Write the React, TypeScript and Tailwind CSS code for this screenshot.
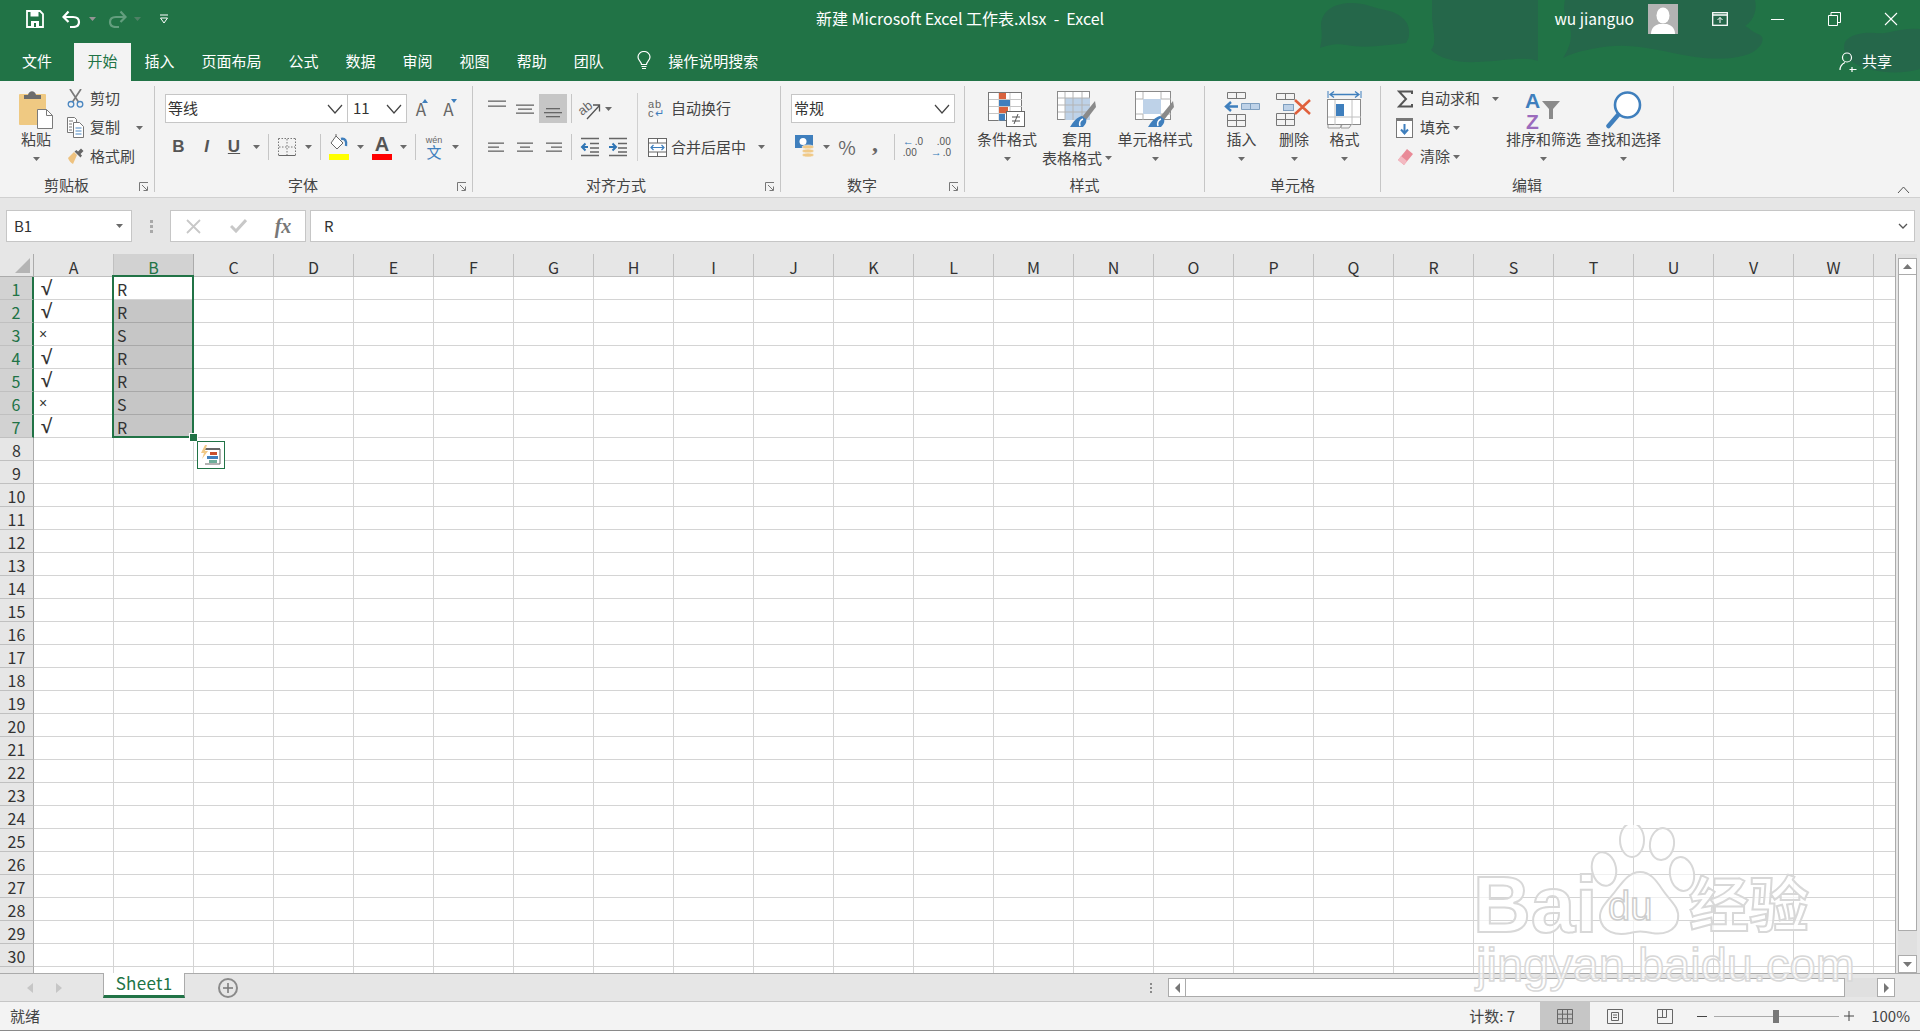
import type { ReactNode } from 'react'

const columns = 'ABCDEFGHIJKLMNOPQRSTUVWX'.split('')
const rows = Array.from({ length: 31 }, (_, i) => i + 1)
const colA = ['√', '√', '×', '√', '√', '×', '√']
const colB = ['R', 'R', 'S', 'R', 'R', 'S', 'R']

function Caret({ className = '' }: { className?: string }) {
  return (
    <svg width="7" height="4" viewBox="0 0 7 4" className={`shrink-0 ${className}`}>
      <path d="M0 0h7L3.5 4z" fill="#6a6a6a" />
    </svg>
  )
}

function Slot({ className = '', children }: { className?: string; children?: ReactNode }) {
  return <span className={`flex items-center justify-center shrink-0 h-full ${className}`}>{children}</span>
}

function Sep() {
  return <span className="block w-px h-full bg-[#c6c6c6]" />
}

function Chevron({ size = 16 }: { size?: number }) {
  return (
    <svg width={size} height="10" viewBox="0 0 16 10">
      <path d="M1 1l7 8 7-8" fill="none" stroke="#444" strokeWidth="1.2" />
    </svg>
  )
}

function Launcher() {
  return (
    <svg width="10" height="10" viewBox="0 0 10 10">
      <path d="M0.5 9V0.5H9M3 3l5 5M8.500 4.500v4h-4" fill="none" stroke="#777" strokeWidth="1" />
    </svg>
  )
}

function Group({ className, label, launcher, children }: { className: string; label: string; launcher?: boolean; children: ReactNode }) {
  return (
    <div className={`flex flex-col h-[106px] mt-[5px] shrink-0 border-r border-[#c6c6c6] ${className}`}>
      <div className="flex h-[89px]">{children}</div>
      <div className="flex items-center h-[17px] pt-[4px] text-[15px] text-[#444]">
        <span className="flex-1 text-center">{label}</span>
        {launcher && <span className="flex justify-center w-[21px] pt-[2px]"><Launcher /></span>}
      </div>
    </div>
  )
}

function Large({ className = '', icon, lines, caret = true, inlineCaret }: { className?: string; icon: ReactNode; lines: string[]; caret?: boolean; inlineCaret?: boolean }) {
  return (
    <div className={`flex flex-col items-center shrink-0 pt-[4px] text-[15px] leading-[19px] text-[#444] ${className}`}>
      <div className="flex items-center justify-center h-[39px]">{icon}</div>
      {lines.map((line, i) => (
        <div key={line} className="flex items-center whitespace-nowrap h-[19px]">
          {line}
          {inlineCaret && i === lines.length - 1 && <Caret className="ml-[3px]" />}
        </div>
      ))}
      {caret && !inlineCaret && <div className="flex items-center h-[21px]"><Caret /></div>}
    </div>
  )
}

function SmallRow({ icon, text, caret, iconClass = 'w-[17px]', textClass = 'ml-[6px]', caretClass = 'ml-[5px]' }: { icon: ReactNode; text: string; caret?: boolean; iconClass?: string; textClass?: string; caretClass?: string }) {
  return (
    <div className="flex items-center h-[29px] text-[15px] text-[#444] whitespace-nowrap">
      <span className={`flex justify-center shrink-0 ${iconClass}`}>{icon}</span>
      <span className={textClass}>{text}</span>
      {caret && <Caret className={caretClass} />}
    </div>
  )
}

function Lines({ items }: { items: [number, number][] }) {
  return (
    <svg width="20" height="18" viewBox="0 0 20 18">
      {items.map(([x, y], i) => (
        <rect key={i} x={x} y={y} width={20 - 2 * x} height="1.300" fill="#666" />
      ))}
    </svg>
  )
}

function LeftLines({ items }: { items: [number, number, number][] }) {
  return (
    <svg width="20" height="18" viewBox="0 0 20 18">
      {items.map(([x, w, y], i) => (
        <rect key={i} x={x} y={y} width={w} height="1.300" fill="#666" />
      ))}
    </svg>
  )
}

function PasteIcon() {
  return (
    <svg width="36" height="40" viewBox="0 0 36 40">
      <rect x="1" y="4" width="27" height="31" rx="1" fill="#efc982" />
      <path d="M6 9V5h4c1-5 7-5 8 0h5v4z" fill="#6c6c6c" />
      <path d="M19.500 19.500h9l6 6v13h-15z" fill="#fff" stroke="#7a7a7a" />
      <path d="M28.500 19.500v6h6" fill="none" stroke="#7a7a7a" />
    </svg>
  )
}

function ScissorsIcon() {
  return (
    <svg width="17" height="19" viewBox="0 0 17 19">
      <path d="M3 0l8.500 13M14 0L5.500 13" stroke="#7a7a7a" strokeWidth="1.700" fill="none" />
      <circle cx="4" cy="15.300" r="2.800" fill="none" stroke="#4a86c0" strokeWidth="1.300" />
      <circle cx="13" cy="15.300" r="2.800" fill="none" stroke="#4a86c0" strokeWidth="1.300" />
    </svg>
  )
}

function CopyIcon() {
  return (
    <svg width="17" height="21" viewBox="0 0 17 21">
      <path d="M.5 .5h7l2 2v13H.5z" fill="#fff" stroke="#777" />
      <path d="M6.500 5.500h6l4 4v11h-10z" fill="#fff" stroke="#777" />
      <path d="M2 4h4M2 7h3M2 10h3M2 13h3" stroke="#777" />
      <path d="M8.500 11h6M8.500 14h6M8.500 17h6" stroke="#4a86c0" />
    </svg>
  )
}

function BrushIcon() {
  return (
    <svg width="17" height="17" viewBox="0 0 17 17">
      <path d="M10 7l-3-3 -6 6c1 3 3 5 5 6z" fill="#eec27f" />
      <path d="M7.500 3.500l2-1.500 5.500 5.500-1.500 2zM11 3.500L14 .5l2.500 2.500-3 3z" fill="#666" />
    </svg>
  )
}

function FillIcon() {
  return (
    <svg width="20" height="26" viewBox="0 0 20 26">
      <path d="M7 2l7 7-6 6-6-6z" fill="#fff" stroke="#666" />
      <path d="M7 2V0" stroke="#666" />
      <path d="M12 5c4-1 6 2 5 7" fill="none" stroke="#3f7fbd" strokeWidth="2.400" />
      <rect y="20" width="20" height="6" fill="#ffff00" />
    </svg>
  )
}

function OrientationIcon() {
  return (
    <svg width="26" height="26" viewBox="0 0 26 26" className="overflow-visible">
      <text x="2" y="17" fontSize="13" fill="#666" transform="rotate(-38 8 14)" fontFamily="Liberation Sans">ab</text>
      <path d="M10 23L22 10M16 9h6.500v6.500" fill="none" stroke="#555" strokeWidth="1.300" />
    </svg>
  )
}

function MergeIcon() {
  return (
    <svg width="19" height="19" viewBox="0 0 19 19">
      <rect x=".5" y=".5" width="18" height="18" fill="#fff" stroke="#666" />
      <path d="M1 5h17M1 14h17M9.500 1v4M9.500 14v4" stroke="#666" />
      <path d="M3 9.500h13M5.500 7l-2.500 2.500L5.500 12M13.500 7l2.500 2.500L13.500 12" fill="none" stroke="#3f7fbd" strokeWidth="1.200" />
    </svg>
  )
}

function IndentIcon({ flip }: { flip?: boolean }) {
  return (
    <svg width="20" height="20" viewBox="0 0 20 20">
      <path d="M1 1.500h18M10 6.500h9M10 11h9M10 15h9M1 18.500h18" stroke="#666" strokeWidth="1.300" />
      {flip
        ? <path d="M1 10h6M4.500 6.500L8 10l-3.500 3.500" fill="none" stroke="#2f75b5" strokeWidth="2" />
        : <path d="M8 10H2M5.500 6.500L2 10l3.500 3.500" fill="none" stroke="#2f75b5" strokeWidth="2" />}
    </svg>
  )
}

function CurrencyIcon() {
  return (
    <svg width="20" height="24" viewBox="0 0 20 24">
      <rect width="18" height="13" fill="#3f7fbd" />
      <circle cx="8" cy="6.500" r="3.500" fill="#fff" />
      <ellipse cx="13" cy="12" rx="6" ry="2" fill="#f0c987" stroke="#f3f3f3" strokeWidth=".6" />
      <ellipse cx="13" cy="16" rx="6" ry="2" fill="#f0c987" stroke="#f3f3f3" strokeWidth=".6" />
      <ellipse cx="13" cy="20" rx="6" ry="2" fill="#f0c987" stroke="#f3f3f3" strokeWidth=".6" />
    </svg>
  )
}

function DecimalIcon({ up }: { up?: boolean }) {
  return (
    <span className="flex flex-col text-[10px] leading-[11px] text-[#555] font-['Liberation_Sans',sans-serif]">
      {up ? (
        <>
          <span className="flex items-center"><i className="not-italic text-[#2f75b5] text-[11px] font-bold mr-[1px]">←</i>.0</span>
          <span>.00</span>
        </>
      ) : (
        <>
          <span className="pl-[6px]">.00</span>
          <span className="flex items-center"><i className="not-italic text-[#2f75b5] text-[11px] font-bold mr-[1px]">→</i>.0</span>
        </>
      )}
    </span>
  )
}

function ConditionalIcon() {
  return (
    <svg width="38" height="36" viewBox="0 0 38 36">
      <rect x=".5" y=".5" width="33" height="28" fill="#fff" stroke="#777" />
      <path d="M1 7.500h33M1 14.500h33M1 21.500h33M11 1v28M22 1v28" stroke="#c6c6c6" />
      <rect x="11" y="1" width="7" height="6" fill="#d9623d" />
      <rect x="11" y="8" width="11" height="6" fill="#3f7fbd" />
      <rect x="11" y="15" width="9" height="6" fill="#d9623d" />
      <rect x="11" y="22" width="6" height="6.500" fill="#3f7fbd" />
      <rect x="18.500" y="19.500" width="18" height="15" fill="#fff" stroke="#666" />
      <path d="M24 25h8M24 29h8M30 22l-4 10" stroke="#555" fill="none" />
    </svg>
  )
}

function Roller() {
  return (
    <>
      <path d="M38 10l1 6-10 13-4-3z" fill="#8a8a8a" />
      <path d="M25 25c-5 1-9 6-12 11h13c3-3 4-6 3-8z" fill="#3f7fbd" />
      <path d="M26 28c-3 1-4 4-3 7" fill="none" stroke="#fff" strokeWidth="1.500" />
    </>
  )
}

function TableStyleIcon() {
  return (
    <svg width="40" height="37" viewBox="0 0 40 37">
      <rect x=".5" y=".5" width="32" height="28" fill="#fff" stroke="#8a8a8a" />
      <rect x="8" y="7" width="25" height="22" fill="#bed2e8" />
      <path d="M1 7h32M1 14h32M1 21h32M8 1v28M16 1v28M25 1v28" stroke="#b4b4b4" />
      <Roller />
    </svg>
  )
}

function CellStyleIcon() {
  return (
    <svg width="40" height="37" viewBox="0 0 40 37">
      <rect x=".5" y=".5" width="35" height="28" fill="#fff" stroke="#8a8a8a" />
      <rect x="8" y="8" width="18" height="15" fill="#bed2e8" />
      <path d="M1 8h7M26 8h10M1 23h7M26 23h10M8 1v7M26 1v7M8 23v6M26 23v6" stroke="#b4b4b4" />
      <Roller />
    </svg>
  )
}

function InsertIcon() {
  return (
    <svg width="36" height="35" viewBox="0 0 36 35">
      <path d="M3.500 .5h18v6h-18zM12.500 .5v6M3.500 22.500h18v12h-18zM3.500 28.500h18M12.500 22.500v12" fill="none" stroke="#777" />
      <path d="M17.500 11.500h18v6h-18z" fill="#bed2e8" stroke="#7f9fbf" />
      <path d="M26.500 11.500v6" stroke="#7f9fbf" />
      <path d="M2 14.500h12M7 10l-5 4.500L7 19" fill="none" stroke="#3f7fbd" strokeWidth="2.400" />
    </svg>
  )
}

function DeleteIcon() {
  return (
    <svg width="36" height="33" viewBox="0 0 36 33">
      <path d="M.5 .5h18v6H.5zM9.500 .5v6M.5 20.500h18v12H.5zM.5 26.500h18M9.500 20.500v12" fill="none" stroke="#777" />
      <rect x="7.500" y="11.500" width="10" height="6" fill="#bed2e8" stroke="#7f9fbf" />
      <path d="M19 7l15 14M34 7L19 21" stroke="#e0603c" strokeWidth="2.500" />
    </svg>
  )
}

function FormatIcon() {
  return (
    <svg width="36" height="38" viewBox="0 0 36 38">
      <path d="M1 0v7M34 0v7" stroke="#3f7fbd" />
      <path d="M3 3.500h29M7 .5l-4 3 4 3M28 .5l4 3-4 3" fill="none" stroke="#3f7fbd" strokeWidth="1.300" />
      <rect x=".5" y="8.500" width="33" height="25" fill="#fff" stroke="#8a8a8a" />
      <path d="M1 26h33M8 9v25M25 9v25" stroke="#c0c0c0" />
      <rect x="9" y="13" width="8" height="12" fill="#3f7fbd" />
      <path d="M1 34v3h12l2-3M14 34v3h8l2-3" fill="none" stroke="#999" />
    </svg>
  )
}

function SortIcon() {
  return (
    <svg width="38" height="40" viewBox="0 0 38 40" fontFamily="Liberation Sans" fontWeight="700" fontSize="21">
      <text x="0" y="18" fill="#3f7fbd">A</text>
      <text x="1" y="39" fill="#9b6bbd">Z</text>
      <path d="M17 11h18l-7 8v10h-4V19z" fill="#8a8a8a" />
    </svg>
  )
}

function FindIcon() {
  return (
    <svg width="36" height="42" viewBox="0 0 36 42">
      <circle cx="21.500" cy="16" r="12.500" fill="#fff" stroke="#3f7fbd" strokeWidth="2.600" />
      <path d="M12 26L2.500 37" stroke="#3f7fbd" strokeWidth="4.500" strokeLinecap="round" />
    </svg>
  )
}

function Paw() {
  return (
    <svg width="112" height="112" viewBox="0 0 112 112" className="shrink-0">
      <g fill="rgba(255,255,255,.65)" stroke="#d8d8d8" strokeWidth="2">
        <ellipse cx="14" cy="44" rx="12" ry="17" transform="rotate(-12 14 44)" />
        <ellipse cx="42" cy="15" rx="12" ry="17" />
        <ellipse cx="72" cy="19" rx="12" ry="16" transform="rotate(8 72 19)" />
        <ellipse cx="92" cy="49" rx="12" ry="17" transform="rotate(-10 92 49)" />
        <path d="M50 47c10 0 16 8 22 17 8 12 18 18 16 30-2 13-16 16-26 14-8-2-16-2-22 0-14 3-28-1-30-15-1-11 10-19 17-29 7-9 13-17 23-17z" />
      </g>
      <text x="18" y="95" fontSize="40" fontFamily="Liberation Sans" fill="rgba(255,255,255,.7)" stroke="#cdcdcd" strokeWidth="1.500">du</text>
    </svg>
  )
}

function Watermark() {
  return (
    <div className="absolute left-[1473px] top-[825px] z-20 pointer-events-none font-['Liberation_Sans',sans-serif]">
      <div className="flex items-end h-[112px]">
        <span className="w-[117px] mb-[-12px] text-[80px] leading-[88px] font-bold text-white/70 [-webkit-text-stroke:2px_#d8d8d8]">Bai</span>
        <span className="-mr-[13px]"><Paw /></span>
        <span className="text-[60px] leading-[72px] font-bold text-white/70 [-webkit-text-stroke:2px_#d8d8d8] font-['Noto_Sans_CJK_SC',sans-serif]">经验</span>
      </div>
      <div className="text-[47px] leading-[50px] mt-[3px] ml-[3px] text-white/70 [-webkit-text-stroke:1.500px_#d8d8d8] whitespace-nowrap">jingyan.baidu.com</div>
    </div>
  )
}

function TitleBar() {
  const tabs = ['文件', '开始', '插入', '页面布局', '公式', '数据', '审阅', '视图', '帮助', '团队']
  return (
    <header className="relative shrink-0 h-[81px] bg-[#217346] text-white overflow-hidden">
      <svg width="620" height="81" viewBox="0 0 620 81" className="absolute right-0 top-0">
        <g fill="#25674a">
          <path d="M20 48c2-8 2-14 1-22 0-14 12-23 30-23 14 0 20 4 30 6 18 3 30 12 28 26 0 3-2 6-3 8-20 2-40 6-60 2-10-2-20 1-26 3z" />
          <path d="M132 0h106v61c-14-5-34 0-60 1-20 1-38-3-47-12 6-6 2-20 1-32 0-6 0-12 0-18z" />
          <path d="M265 0h190c2 8 0 20-10 26 6 3 4 4 15 9 4 2 3 8-1 12-8 10-30 13-55 11-30-3-60-14-90-12-18 1-40 6-51 12 5-8 12-20 5-36-4-8-5-14-3-22z" />
          <path d="M545 42c5-8 20-10 30-9 12 2 25-6 45-4v40c-20 6-50 4-66-6-8-6-12-14-9-21z" />
        </g>
      </svg>
      <div className="relative flex items-center h-[43px] pb-[5px]">
        <span className="ml-[26px]">
          <svg width="18" height="18" viewBox="0 0 18 18"><path d="M1 1h13l3 3v13H1z" fill="none" stroke="#fff" strokeWidth="1.800" /><path d="M4.500 1.500h8v5h-8zM5 11h8v6h-8z" fill="#fff" /><rect x="8" y="13" width="2" height="4" fill="#217346" /></svg>
        </span>
        <span className="ml-[18px]">
          <svg width="19" height="18" viewBox="0 0 19 18"><path d="M2 7h9c4 0 6 2 6 5s-2 5-6 5H8" fill="none" stroke="#fff" strokeWidth="2.200" /><path d="M6.500 1.500L1.500 7l5 5" fill="none" stroke="#fff" strokeWidth="2.200" /></svg>
        </span>
        <Caret className="ml-[8px] invert" />
        <span className="ml-[12px] opacity-40">
          <svg width="19" height="18" viewBox="0 0 19 18"><path d="M17 7H8c-4 0-6 2-6 5s2 5 6 5h3" fill="none" stroke="#c7e0d2" strokeWidth="2.200" /><path d="M12.500 1.500l5 5.500-5 5" fill="none" stroke="#c7e0d2" strokeWidth="2.200" /></svg>
        </span>
        <Caret className="ml-[7px] invert opacity-40" />
        <span className="ml-[18px]">
          <svg width="10" height="10" viewBox="0 0 10 10"><path d="M1 1h8M1.500 4l3.500 5 3.500-5z" fill="none" stroke="#fff" /></svg>
        </span>
        <span className="absolute left-0 right-0 top-0 text-center leading-[37px] text-[16px] pointer-events-none">新建 Microsoft Excel 工作表.xlsx&nbsp; -&nbsp; Excel</span>
        <span className="ml-auto text-[15.500px]">wu jianguo</span>
        <span className="flex items-end justify-center overflow-hidden ml-[14px] w-[30px] h-[30px] bg-[#b3b3b3]">
          <svg width="26" height="27" viewBox="0 0 26 27"><ellipse cx="13" cy="8.500" rx="6.500" ry="8" fill="#fff" /><path d="M1 27c0-7 5-9 8-10h8c3 1 8 3 8 10z" fill="#fff" /></svg>
        </span>
        <span className="flex justify-center ml-[34px] w-[16px]">
          <svg width="16" height="14" viewBox="0 0 16 14"><rect x=".7" y=".7" width="14.600" height="12.600" fill="none" stroke="#fff" strokeWidth="1.300" /><path d="M1 3h14" stroke="#fff" strokeWidth="1.500" /><path d="M8 11V5.500M5.500 8L8 5.500 10.500 8" fill="none" stroke="#fff" /></svg>
        </span>
        <span className="flex justify-center ml-[41px] w-[16px]"><span className="block w-[13px] h-px bg-white" /></span>
        <span className="flex justify-center ml-[41px] w-[16px]">
          <svg width="13" height="14" viewBox="0 0 13 14"><path d="M.5 3.500h9v10h-9zM3 3.500V.5h9.500v10H9.500" fill="none" stroke="#fff" /></svg>
        </span>
        <span className="flex justify-center ml-[41px] mr-[21px] w-[16px]">
          <svg width="14" height="14" viewBox="0 0 14 14"><path d="M1 1l12 12M13 1L1 13" stroke="#fff" strokeWidth="1.100" /></svg>
        </span>
      </div>
      <nav className="relative flex items-stretch h-[38px] pl-[8.500px] text-[15px]">
        {tabs.map(t => (
          <span
            key={t}
            className={`flex items-center pb-[2px] ${t === '文件' ? 'pl-[13.500px] pr-[22px]' : 'px-[13.500px]'} ${t === '开始' ? 'bg-[#f3f3f3] text-[#217346]' : ''}`}
          >
            {t}
          </span>
        ))}
        <span className="flex items-center ml-[20px] pb-[2px]">
          <svg width="14" height="20" viewBox="0 0 14 20"><path d="M4.500 13.500c0-3-3.500-4-3.500-7.500a6 5.500 0 0 1 12 0c0 3.500-3.500 4.500-3.500 7.500z" fill="none" stroke="#fff" strokeWidth="1.200" /><path d="M4.500 15.500h5M5 17.500h4" stroke="#fff" strokeWidth="1.200" /></svg>
        </span>
        <span className="flex items-center ml-[17px] pb-[2px]">操作说明搜索</span>
        <span className="flex items-center ml-auto mr-[28px] pb-[2px]">
          <svg width="18" height="21" viewBox="0 0 18 21" className="mr-[5px]"><circle cx="8" cy="6.500" r="4.500" fill="none" stroke="#fff" strokeWidth="1.200" /><path d="M1 19c0-4 2-6 5-7.500M13 16v5M10.500 18.500h7" fill="none" stroke="#fff" strokeWidth="1.200" /></svg>
          共享
        </span>
      </nav>
    </header>
  )
}

function Ribbon() {
  return (
    <section className="flex shrink-0 h-[117px] bg-[#f3f3f3] border-b border-[#d0d0d0]">
      <Group className="w-[155px]" label="剪贴板" launcher>
        <Large className="ml-[6px] w-[60px]" icon={<PasteIcon />} lines={['粘贴']} />
        <div className="ml-[1px] -mt-[2px]">
          <SmallRow icon={<ScissorsIcon />} text="剪切" />
          <SmallRow icon={<CopyIcon />} text="复制" caret caretClass="ml-[16px]" />
          <SmallRow icon={<BrushIcon />} text="格式刷" />
        </div>
      </Group>

      <Group className="w-[318px]" label="字体" launcher>
        <div className="pl-[10px] pt-[8px] text-[15px] text-[#333]">
          <div className="flex items-center h-[29px]">
            <div className="flex items-center justify-between w-[183px] h-full pl-[2px] pr-[4px] bg-white border border-[#c6c6c6]">等线<Chevron /></div>
            <div className="flex items-center justify-between w-[60px] h-full -ml-px pl-[5px] pr-[4px] bg-white border border-[#c6c6c6]">11<Chevron /></div>
            <Slot className="w-[28px] text-[17px] text-[#666]">
              <span className="relative">A<i className="absolute top-[3px] -right-[2px] block border-x-[3px] border-b-[4px] border-x-transparent border-b-[#3f7fbd]" /></span>
            </Slot>
            <Slot className="w-[27px] text-[17px] text-[#666]">
              <span className="relative">A<i className="absolute top-[3px] -right-[3px] block border-x-[3px] border-t-[4px] border-x-transparent border-t-[#3f7fbd]" /></span>
            </Slot>
          </div>
          <div className="flex items-center h-[26px] mt-[11px] text-[#555] font-['Liberation_Sans',sans-serif] text-[17px]">
            <Slot className="w-[27px] font-bold">B</Slot>
            <Slot className="w-[29px] italic font-bold">I</Slot>
            <Slot className="w-[26px] font-bold underline">U</Slot>
            <Slot className="w-[18px]"><Caret /></Slot>
            <Slot className="w-[7px]"><Sep /></Slot>
            <Slot className="w-[29px]">
              <svg width="18" height="18" viewBox="0 0 18 18"><path d="M.5 .5h17M.5 .5v17M17.500 .5v17M9 1v16M1 9h16" fill="none" stroke="#777" strokeDasharray="1.500 1.500" /><path d="M.5 17.500h17" stroke="#666" /></svg>
            </Slot>
            <Slot className="w-[14px]"><Caret /></Slot>
            <Slot className="w-[10px]"><Sep /></Slot>
            <Slot className="w-[28px]"><FillIcon /></Slot>
            <Slot className="w-[14px]"><Caret /></Slot>
            <Slot className="w-[30px]">
              <span className="flex flex-col items-center font-bold text-[20px] leading-[20px] text-[#555]">A<i className="block w-[20px] h-[6px] bg-[#ff0000]" /></span>
            </Slot>
            <Slot className="w-[12px]"><Caret /></Slot>
            <Slot className="w-[13px]"><Sep /></Slot>
            <Slot className="w-[24px]">
              <span className="flex flex-col items-center text-[9px] leading-[9px] text-[#666]">wén<b className="font-normal text-[15px] leading-[14px] text-[#3f7fbd] font-['Noto_Sans_CJK_SC',sans-serif]">文</b></span>
            </Slot>
            <Slot className="w-[18px]"><Caret /></Slot>
          </div>
        </div>
      </Group>

      <Group className="w-[308px]" label="对齐方式" launcher>
        <div className="pl-[10px] pt-[8px] w-[164px]">
          <div className="flex items-center h-[29px]">
            <Slot className="w-[28px]"><Lines items={[[1, 0.500], [1, 5.500]]} /></Slot>
            <Slot className="w-[28px]"><Lines items={[[1, 4.500], [3, 8.500], [1, 12.500]]} /></Slot>
            <Slot className="w-[28px] bg-[#c6c6c6]"><Lines items={[[3, 8], [1, 12], [3, 16]]} /></Slot>
            <Slot className="w-[8px]"><Sep /></Slot>
            <Slot className="w-[30px]"><OrientationIcon /></Slot>
            <Slot className="w-[6px]"><Caret /></Slot>
          </div>
          <div className="flex items-center h-[26px] mt-[11px]">
            <Slot className="w-[28px]"><LeftLines items={[[1, 16, 4.500], [1, 11, 8.500], [1, 16, 12.500]]} /></Slot>
            <Slot className="w-[28px]"><Lines items={[[2, 4.500], [5, 8.500], [2, 12.500]]} /></Slot>
            <Slot className="w-[28px]"><LeftLines items={[[3, 16, 4.500], [8, 11, 8.500], [3, 16, 12.500]]} /></Slot>
            <Slot className="w-[8px]"><Sep /></Slot>
            <Slot className="w-[30px]"><IndentIcon /></Slot>
            <Slot className="w-[26px]"><IndentIcon flip /></Slot>
          </div>
        </div>
        <div className="w-px h-[68px] mt-[7px] bg-[#d0d0d0]" />
        <div className="pl-[10px] pt-[8px] text-[15px] text-[#444]">
          <div className="flex items-center h-[29px]">
            <span className="flex flex-col items-start w-[18px] font-['Liberation_Sans',sans-serif] text-[11px] leading-[9px] tracking-[1px] text-[#666]">ab<span className="flex items-center leading-[9px]">c<i className="not-italic text-[#3f7fbd]">↵</i></span></span>
            <span className="ml-[5px] whitespace-nowrap">自动换行</span>
          </div>
          <div className="flex items-center h-[26px] mt-[11px] whitespace-nowrap">
            <MergeIcon />
            <span className="ml-[4px]">合并后居中</span>
            <Caret className="ml-[12px]" />
          </div>
        </div>
      </Group>

      <Group className="w-[184px]" label="数字" launcher>
        <div className="pl-[10px] pt-[8px] text-[15px] text-[#333]">
          <div className="flex items-center justify-between w-[164px] h-[29px] pl-[2px] pr-[4px] bg-white border border-[#c6c6c6]">常规<Chevron /></div>
          <div className="flex items-center h-[26px] mt-[11px] text-[#666]">
            <Slot className="w-[27px]"><CurrencyIcon /></Slot>
            <Slot className="w-[16px]"><Caret /></Slot>
            <Slot className="w-[26px] text-[19px]">%</Slot>
            <Slot className="w-[30px] pb-[8px] text-[24px] font-bold font-['Liberation_Serif',serif]">,</Slot>
            <Slot className="w-[8px]"><Sep /></Slot>
            <Slot className="w-[30px]"><DecimalIcon up /></Slot>
            <Slot className="w-[26px]"><DecimalIcon /></Slot>
          </div>
        </div>
      </Group>

      <Group className="w-[240px]" label="样式">
        <Large className="ml-[7px] w-[70px]" icon={<ConditionalIcon />} lines={['条件格式']} />
        <Large className="w-[70px]" icon={<TableStyleIcon />} lines={['套用', '表格格式']} inlineCaret />
        <Large className="w-[86px]" icon={<CellStyleIcon />} lines={['单元格样式']} />
      </Group>

      <Group className="w-[176px]" label="单元格">
        <Large className="ml-[10px] w-[53px]" icon={<InsertIcon />} lines={['插入']} />
        <Large className="w-[52px]" icon={<DeleteIcon />} lines={['删除']} />
        <Large className="w-[49px]" icon={<FormatIcon />} lines={['格式']} />
      </Group>

      <Group className="w-[293px]" label="编辑">
        <div className="ml-[14px] -mt-[2px] w-[111px]">
          <SmallRow
            iconClass="w-[19px]"
            icon={<svg width="16" height="18" viewBox="0 0 16 18"><path d="M15 4V1.500H2L9 9l-7 7.500h13V14" fill="none" stroke="#555" strokeWidth="2" /></svg>}
            text="自动求和"
            caret
            caretClass="ml-[12px]"
          />
          <SmallRow
            iconClass="w-[19px]"
            icon={<svg width="17" height="20" viewBox="0 0 17 20"><rect x=".5" y=".5" width="16" height="19" fill="#fff" stroke="#777" /><rect width="17" height="3" fill="#777" /><path d="M8.500 6v9M5 11.500L8.500 15.500l3.500-4" fill="none" stroke="#3f7fbd" strokeWidth="2" /></svg>}
            text="填充"
            caret
            caretClass="ml-[3px]"
          />
          <SmallRow
            iconClass="w-[19px]"
            icon={<svg width="18" height="18" viewBox="0 0 18 18"><path d="M11 1l6 5-9 11-6-5z" fill="#e98a97" /><path d="M5 8l6 5-3 4-6-5z" fill="#f3b9c1" /></svg>}
            text="清除"
            caret
            caretClass="ml-[3px]"
          />
        </div>
        <Large className="w-[75px]" icon={<SortIcon />} lines={['排序和筛选']} />
        <Large className="ml-[5px] w-[75px]" icon={<FindIcon />} lines={['查找和选择']} />
      </Group>

      <span className="ml-auto mr-[10px] mb-[3px] self-end">
        <svg width="13" height="8" viewBox="0 0 13 8"><path d="M1 7l5.500-6L12 7" fill="none" stroke="#555" /></svg>
      </span>
    </section>
  )
}

function FormulaBar() {
  return (
    <section className="flex shrink-0 items-center h-[56px] pl-[6px] pr-[5px] bg-[#e6e6e6] text-[15px] text-[#333]">
      <div className="flex items-center justify-between w-[126px] h-[32px] pl-[7px] pr-[8px] bg-white border border-[#c6c6c6]">
        B1
        <Caret />
      </div>
      <div className="flex flex-col items-center justify-center gap-[2px] w-[38px]">
        <i className="block w-[3px] h-[3px] bg-[#a9a9a9]" />
        <i className="block w-[3px] h-[3px] bg-[#a9a9a9]" />
        <i className="block w-[3px] h-[3px] bg-[#a9a9a9]" />
      </div>
      <div className="flex items-center w-[136px] h-[32px] bg-white border border-[#c6c6c6]">
        <Slot className="w-[44px]">
          <svg width="15" height="15" viewBox="0 0 15 15"><path d="M1 1l13 13M14 1L1 14" stroke="#c8c8c8" strokeWidth="1.800" /></svg>
        </Slot>
        <Slot className="w-[46px]">
          <svg width="17" height="14" viewBox="0 0 17 14"><path d="M1 7l5 5L16 1" fill="none" stroke="#c8c8c8" strokeWidth="3" /></svg>
        </Slot>
        <Slot className="w-[44px] font-['Liberation_Serif',serif] italic font-bold text-[20px] text-[#777]">fx</Slot>
      </div>
      <div className="flex items-center justify-between flex-1 h-[32px] ml-[4px] pl-[13px] pr-[6px] bg-white border border-[#c6c6c6]">
        R
        <svg width="10" height="6" viewBox="0 0 10 6"><path d="M1 1l4 4 4-4" fill="none" stroke="#555" strokeWidth="1.300" /></svg>
      </div>
    </section>
  )
}

function Sheet() {
  return (
    <div className="relative flex-1 min-w-0 overflow-hidden border-r border-[#ababab] bg-white text-[16px] text-[#333]">
      <div className="flex h-[23px] bg-[#e6e6e6]">
        <div className="flex items-end justify-end shrink-0 w-[34px] pb-[3px] pr-[3px] border-r border-b border-[#ababab]">
          <i className="block w-0 h-0 border-l-[15px] border-b-[15px] border-l-transparent border-b-[#b4b4b4]" />
        </div>
        {columns.map(c => (
          <div
            key={c}
            className={`flex items-center justify-center w-[80px] shrink-0 pt-[3px] border-r border-b ${c === 'B' ? 'bg-[#d2d2d2] text-[#217346] border-b-[#217346] border-r-[#ababab]' : 'border-[#c0c0c0]'}`}
          >
            {c === 'X' ? '' : c}
          </div>
        ))}
      </div>
      {rows.map(r => {
        const selected = r <= 7
        return (
          <div key={r} className="flex h-[23px]">
            <div className={`flex items-center justify-center w-[34px] shrink-0 pt-[2px] border-b border-b-[#c0c0c0] border-r ${selected ? 'bg-[#d2d2d2] text-[#217346] border-r-[#217346] border-r-2' : 'bg-[#e6e6e6] border-r-[#ababab]'}`}>
              {r <= 30 ? r : ''}
            </div>
            {columns.map(c => (
              <div
                key={c}
                className={`flex items-center w-[80px] shrink-0 border-r border-b border-[#d4d4d4] ${c === 'B' && r > 1 && selected ? 'bg-[#c6c6c6] border-b-[#a8a8a8]' : ''}`}
              >
                {c === 'A' && selected && (
                  <span className={colA[r - 1] === '√' ? 'pl-[7px] text-[20px] font-bold text-[#222] [-webkit-text-stroke:.4px_#222] font-["Liberation_Serif",serif]' : 'pl-[5px] text-[14px] font-["Liberation_Sans",sans-serif]'}>{colA[r - 1]}</span>
                )}
                {c === 'B' && selected && <span className="pl-[3px] pt-[2px]">{colB[r - 1]}</span>}
              </div>
            ))}
          </div>
        )
      })}
      {/* selection box, fill handle and quick analysis button */}
      <div className="absolute left-[112px] top-[21px] w-[82px] h-[163px] border-[2.500px] border-[#217346] pointer-events-none" />
      <div className="absolute left-[189px] top-[179px] w-[7px] h-[7px] bg-[#217346] border border-white box-content" />
      <div className="absolute left-[197px] top-[187px] flex items-center justify-center w-[28px] h-[28px] bg-white border-[1.500px] border-[#217346]">
        <svg width="20" height="20" viewBox="0 0 20 20">
          <path d="M4 4h15v15H4" fill="none" stroke="#666" />
          <rect x="4" y="3" width="15" height="2" fill="#666" />
          <rect x="9" y="7" width="7" height="3" fill="#c9502e" />
          <rect x="6" y="11" width="11" height="3" fill="#3f7fbd" />
          <rect x="8" y="15" width="8" height="3" fill="#6fae9a" />
          <path d="M4 0L0 8h3l-2 6 6-8H4l2-6z" fill="#f0c987" />
        </svg>
      </div>
    </div>
  )
}

function VerticalScroll() {
  return (
    <div className="flex flex-col shrink-0 w-[19px] ml-[2px] mr-[3px] pt-[4px] bg-[#e0e0e0]">
      <div className="flex items-center justify-center h-[17px] bg-white border border-[#ababab]">
        <svg width="9" height="5" viewBox="0 0 9 5"><path d="M4.500 0L9 5H0z" fill="#777" /></svg>
      </div>
      <div className="h-[657px] -mt-px bg-white border border-[#ababab]" />
      <div className="flex-1" />
      <div className="flex items-center justify-center h-[18px] bg-white border border-[#ababab]">
        <svg width="9" height="5" viewBox="0 0 9 5"><path d="M0 0h9L4.500 5z" fill="#777" /></svg>
      </div>
    </div>
  )
}

function SheetTabs() {
  return (
    <footer className="flex shrink-0 items-center h-[29px] bg-[#e6e6e6] border-t border-b border-t-[#ababab] border-b-[#c6c6c6]">
      <span className="ml-[27px] w-0 h-0 border-y-[5px] border-r-[6px] border-y-transparent border-r-[#c6c6c6]" />
      <span className="ml-[23px] w-0 h-0 border-y-[5px] border-l-[6px] border-y-transparent border-l-[#c6c6c6]" />
      <div className="flex items-center justify-center self-start ml-[41px] w-[82px] h-[25px] -mt-px pb-[2px] bg-white border-x border-[#ababab] border-b-[3px] border-b-[#217346] text-[17px] text-[#217346] tracking-[.3px]">Sheet1</div>
      <span className="flex items-center justify-center ml-[33px] w-[20px] h-[20px] rounded-full border-2 border-[#8a8a8a]">
        <svg width="10" height="10" viewBox="0 0 10 10"><path d="M5 0v10M0 5h10" stroke="#777" strokeWidth="1.500" /></svg>
      </span>
      <div className="flex flex-col gap-[2px] ml-[912px]">
        <i className="block w-[2px] h-[2px] bg-[#8a8a8a]" />
        <i className="block w-[2px] h-[2px] bg-[#8a8a8a]" />
        <i className="block w-[2px] h-[2px] bg-[#8a8a8a]" />
      </div>
      <div className="flex items-stretch h-[19px] ml-[16px] w-[727px] bg-[#e0e0e0]">
        <span className="flex items-center justify-center w-[18px] bg-white border border-[#ababab]">
          <span className="w-0 h-0 border-y-[5px] border-r-[5px] border-y-transparent border-r-[#777]" />
        </span>
        <span className="block w-[660px] -ml-px bg-white border border-[#ababab]" />
        <span className="flex-1" />
        <span className="flex items-center justify-center w-[18px] bg-white border border-[#ababab]">
          <span className="w-0 h-0 border-y-[5px] border-l-[5px] border-y-transparent border-l-[#777]" />
        </span>
      </div>
    </footer>
  )
}

function StatusBar() {
  return (
    <footer className="flex shrink-0 items-center h-[29px] bg-[#f3f3f3] border-b border-[#8a8a8a] text-[15px] text-[#444]">
      <span className="ml-[10px]">就绪</span>
      <span className="ml-auto">计数: 7</span>
      <span className="flex items-center justify-center ml-[25px] w-[50px] h-full bg-[#c6c6c6]">
        <svg width="16" height="15" viewBox="0 0 16 15"><path d="M.5 .5h15v14H.5zM.5 5.200h15M.5 9.800h15M5.500 .5v14M10.500 .5v14" fill="none" stroke="#666" /></svg>
      </span>
      <span className="flex items-center justify-center w-[50px] h-full">
        <svg width="16" height="15" viewBox="0 0 16 15"><path d="M.5 .5h15v14H.5zM4.500 3.500h7v8h-7zM6 6h4M6 8.500h4" fill="none" stroke="#666" /></svg>
      </span>
      <span className="flex items-center justify-center w-[50px] h-full">
        <svg width="16" height="15" viewBox="0 0 16 15"><path d="M.5 .5h15v14H.5zM.5 8.500h9V.5M5.500 .5v8" fill="none" stroke="#666" /></svg>
      </span>
      <span className="block ml-[7px] w-[10px] h-px bg-[#444]" />
      <span className="flex items-center ml-[7px] w-[125px] h-px bg-[#a9a9a9]">
        <i className="block ml-[59px] w-[6px] h-[13px] bg-[#777]" />
      </span>
      <span className="ml-[5px]">
        <svg width="10" height="10" viewBox="0 0 10 10"><path d="M5 0v10M0 5h10" stroke="#444" /></svg>
      </span>
      <span className="ml-[17px] mr-[10px]">100%</span>
    </footer>
  )
}

export default function App() {
  return (
    <div className="relative flex flex-col w-[1920px] h-[1031px] overflow-hidden bg-[#e6e6e6] font-['Noto_Sans_CJK_SC','Noto_Sans',sans-serif]">
      <TitleBar />
      <Ribbon />
      <FormulaBar />
      <main className="flex flex-1 min-h-0">
        <Sheet />
        <VerticalScroll />
      </main>
      <SheetTabs />
      <StatusBar />
      <Watermark />
    </div>
  )
}
